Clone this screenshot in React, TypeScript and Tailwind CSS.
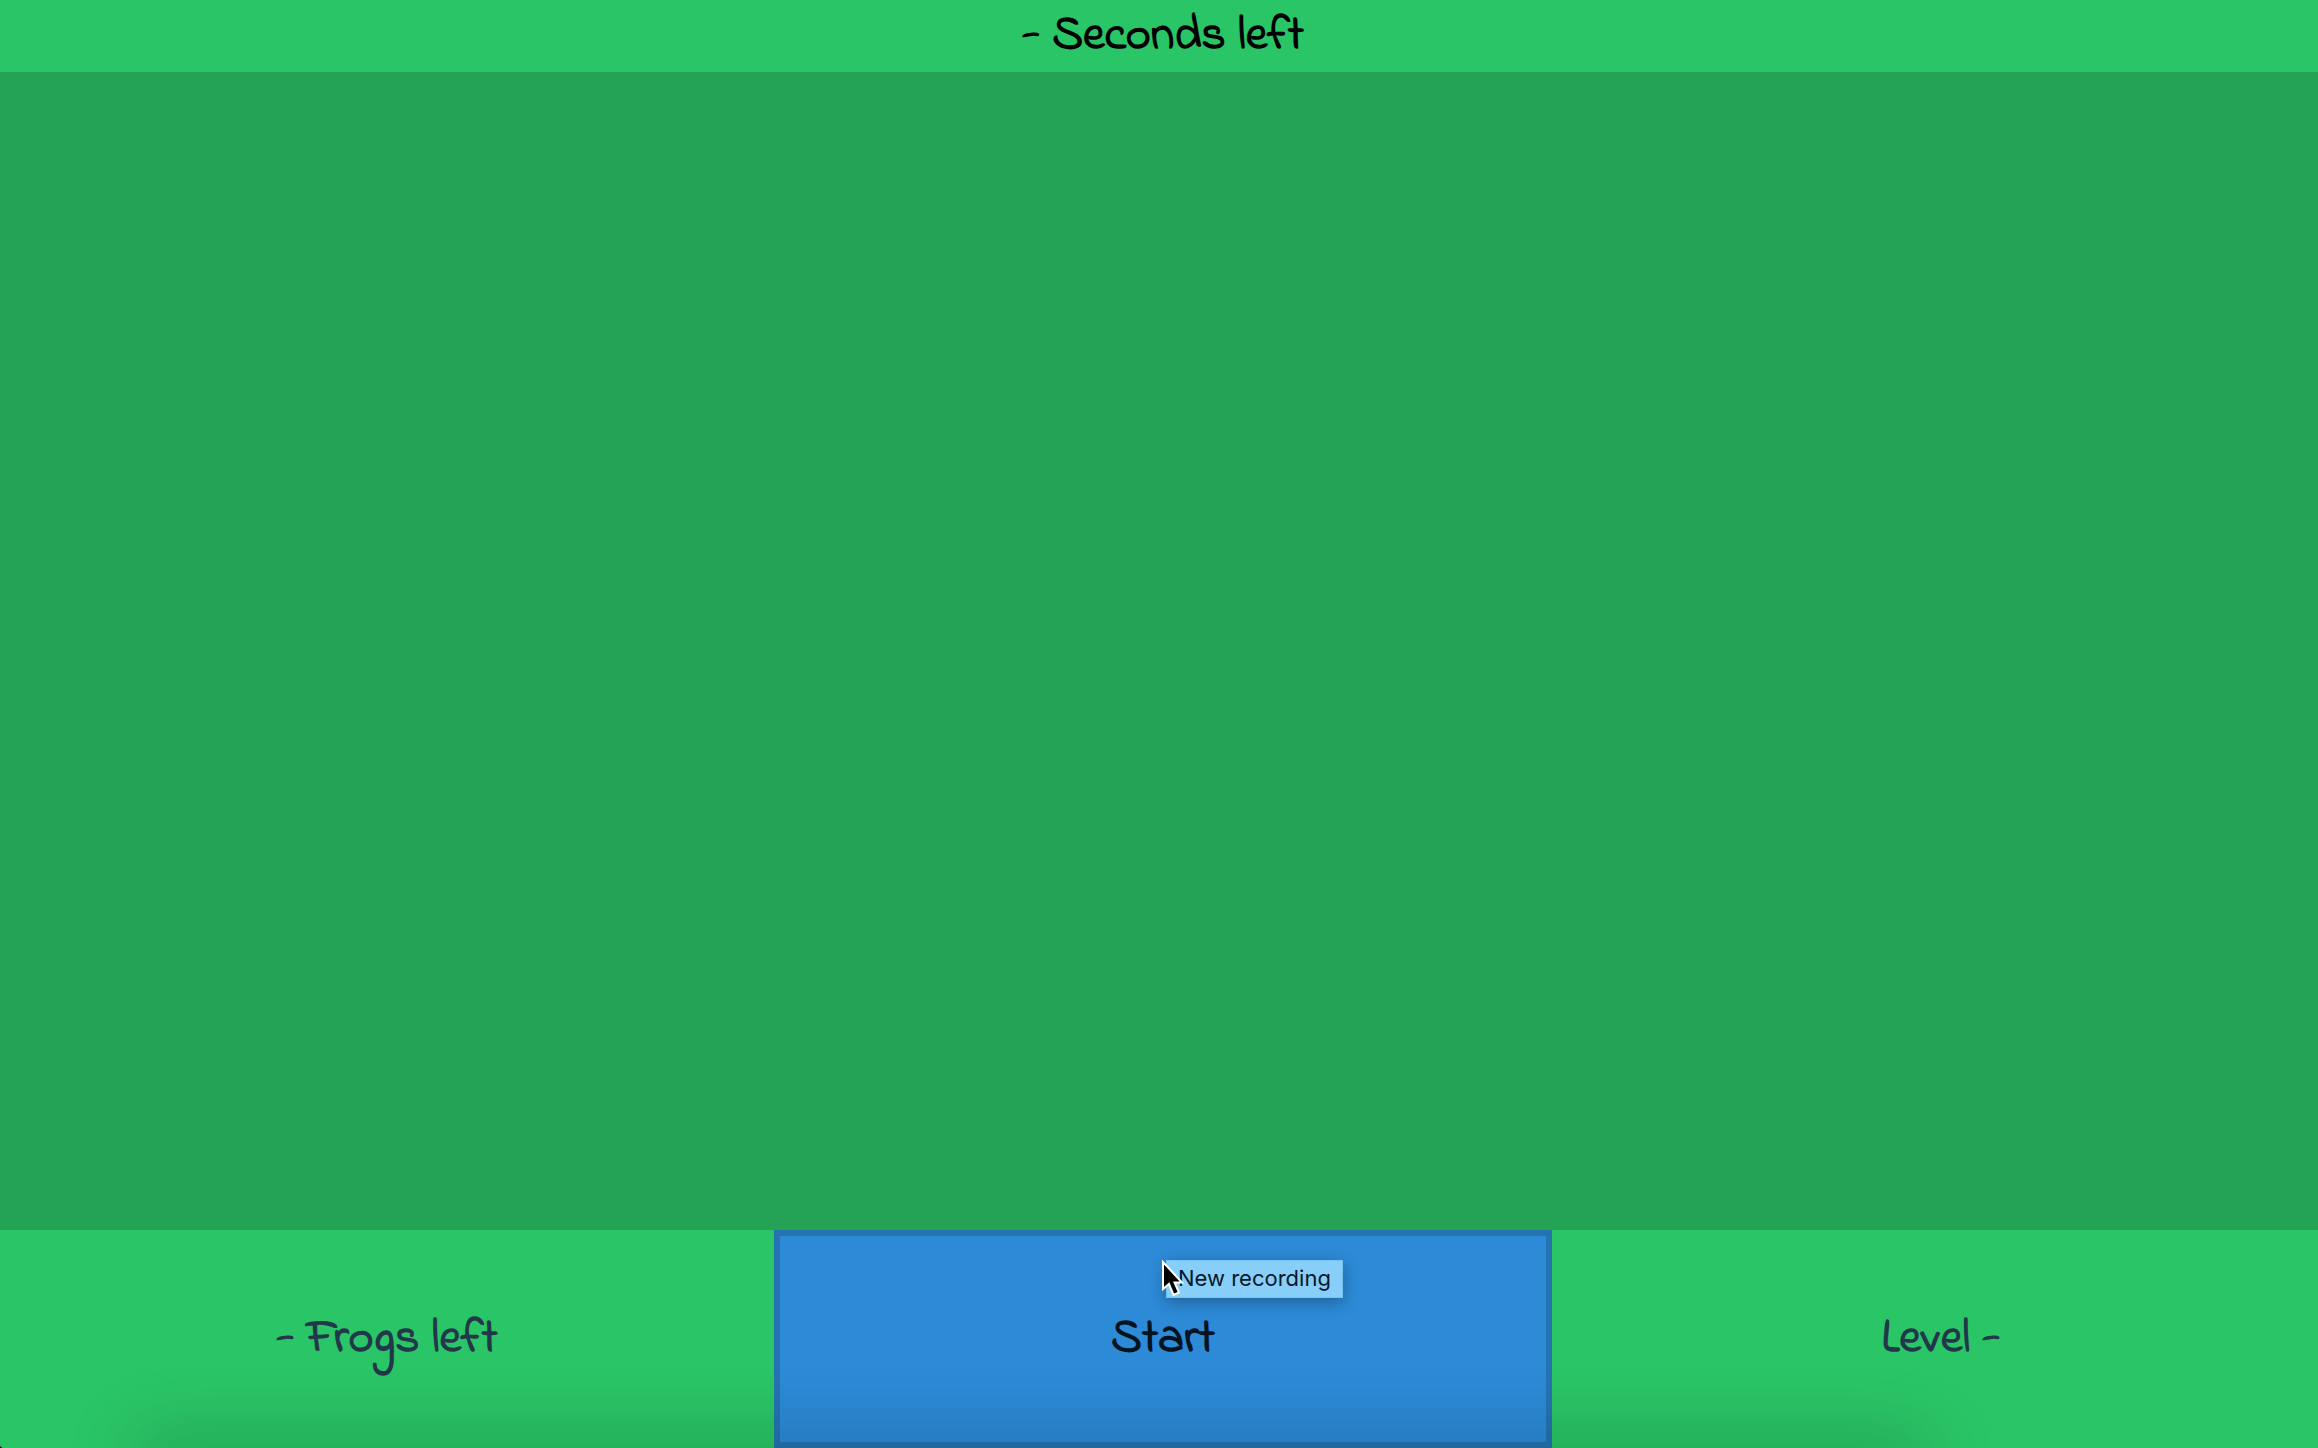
export default function App() {
  return (
    <div className="h-screen bg-black">
      <main className="relative grid h-full grid-rows-[72fr_1158fr_218fr] overflow-hidden rounded-bl bg-[#24a356] font-['Indie_Flower',cursive] text-[48px]/[52px] font-bold">
        <header className="flex items-center justify-center bg-[#2ac566] pl-2">
          <h1 className="text-black">- Seconds left</h1>
        </header>

        <section aria-label="Playing field" />

        <footer className="grid grid-cols-[774fr_778fr_766fr] bg-[#2ac566] text-[#22384a]">
          <p className="flex items-center justify-center">- Frogs left</p>
          <button
            type="button"
            className="flex items-center justify-center border-6 border-[#2573b0] bg-[#2c8ad6] text-[#05131f]"
          >
            Start
          </button>
          <p className="flex items-center justify-center pl-3">Level -</p>
        </footer>

        <div className="pointer-events-none absolute -bottom-5 left-[6%] h-5 w-[77%] rounded-full shadow-[0_0_70px_6px_rgba(0,0,0,0.28)]" />

        <div
          role="tooltip"
          className="pointer-events-none absolute bottom-[150px] left-[1166px] flex h-[38px] items-center border border-[#78c3f5] bg-[#87cef8] px-[11px] pb-0.5 font-['Inter',sans-serif] text-[22px]/[28px] font-normal text-[#06182a] shadow-[0_4px_16px_rgba(0,0,0,0.3)]"
        >
          New recording
        </div>
        <svg
          className="pointer-events-none absolute bottom-[150px] left-[1160px] h-10 w-6"
          viewBox="0 0 24 40"
          aria-hidden="true"
        >
          <path
            d="M3 4V31L9 26L13.5 37L19 34.500L14.5 24.500H22Z"
            fill="#000"
            stroke="#fff"
            strokeWidth="2"
          />
        </svg>
      </main>
    </div>
  );
}
